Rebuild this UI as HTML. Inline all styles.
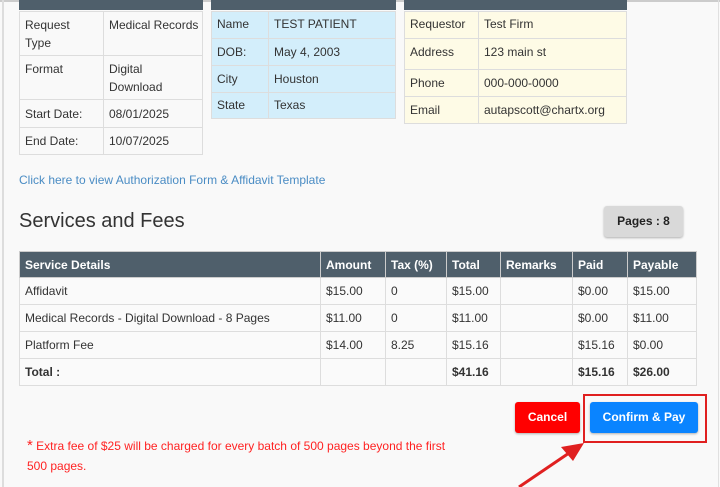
<!DOCTYPE html>
<html><head><style>
body{margin:0;width:720px;height:487px;overflow:hidden;background:#f9f9f9;font-family:"Liberation Sans",Arial,sans-serif;font-size:12px;color:#333;position:relative}
.edge{position:absolute;top:0;bottom:0;left:2px;width:2px;background:#ddd}
.edge2{position:absolute;top:0;bottom:0;right:1px;width:1px;background:#e0e0e0}
.topline{position:absolute;top:0;left:0;right:0;height:2px;background:#ccc}
table{border-collapse:collapse;position:absolute;table-layout:fixed}
td,th{border:1px solid #ddd;text-align:left;vertical-align:top;padding:3px 5px;line-height:18px;white-space:nowrap;overflow:hidden}
.hd{position:absolute;background:#4f5f6b;height:10px;top:0}
.ft th{background:#4f5f6b;color:#fff;font-weight:bold;vertical-align:middle;border-color:#ccc;padding:2px 5px}
.ft td{vertical-align:middle;padding:2px 5px}
.btn{position:absolute;border-radius:3px;color:#fff;font-weight:bold;font-size:12px;text-align:center;line-height:31px;box-shadow:0 1px 2px rgba(0,0,0,.3)}
</style></head><body>
<div class="topline"></div><div class="edge"></div><div class="edge2"></div>
<div class="hd" style="left:19px;width:184px"></div>
<div class="hd" style="left:211px;width:185px"></div>
<div class="hd" style="left:404px;width:223px"></div>
<table style="left:19px;top:11px;width:184px;background:#f9f9f9">
<colgroup><col style="width:84px"><col></colgroup>
<tr style="height:44px"><td style="white-space:normal;padding-top:4px">Request Type</td><td style="padding-right:2px;padding-top:4px">Medical Records</td></tr>
<tr style="height:43px"><td style="padding-top:4px">Format</td><td style="white-space:normal;padding-top:4px">Digital Download</td></tr>
<tr style="height:28px"><td style="vertical-align:middle">Start Date:</td><td style="vertical-align:middle">08/01/2025</td></tr>
<tr style="height:27px"><td style="vertical-align:middle">End Date:</td><td style="vertical-align:middle">10/07/2025</td></tr>
</table>
<table style="left:211px;top:11px;width:185px;background:#d3eefb">
<colgroup><col style="width:57px"><col></colgroup>
<tr style="height:27px"><td>Name</td><td>TEST PATIENT</td></tr>
<tr style="height:27px"><td style="vertical-align:middle">DOB:</td><td style="vertical-align:middle">May 4, 2003</td></tr>
<tr style="height:27px"><td style="vertical-align:middle">City</td><td style="vertical-align:middle">Houston</td></tr>
<tr style="height:26px"><td>State</td><td>Texas</td></tr>
</table>
<table style="left:404px;top:11px;width:223px;background:#fefbe6">
<colgroup><col style="width:74px"><col></colgroup>
<tr style="height:27px"><td>Requestor</td><td>Test Firm</td></tr>
<tr style="height:31px"><td style="padding-top:4px">Address</td><td style="padding-top:4px">123 main st</td></tr>
<tr style="height:27px"><td style="vertical-align:middle">Phone</td><td style="vertical-align:middle">000-000-0000</td></tr>
<tr style="height:27px"><td style="vertical-align:middle">Email</td><td style="vertical-align:middle">autapscott@chartx.org</td></tr>
</table>
<div style="position:absolute;left:19px;top:173px;color:#4a8cc4">Click here to view Authorization Form &amp; Affidavit Template</div>
<div style="position:absolute;left:19px;top:210px;font-size:20px;color:#333">Services and Fees</div>
<div class="btn" style="left:604px;top:206px;width:79px;background:#d9d9d9;color:#222">Pages : 8</div>
<table class="ft" style="left:19px;top:251px;width:678px;background:#fafafa">
<colgroup><col style="width:301px"><col style="width:65px"><col style="width:61px"><col style="width:54px"><col style="width:72px"><col style="width:55px"><col></colgroup>
<tr style="height:26px"><th>Service Details</th><th>Amount</th><th>Tax (%)</th><th>Total</th><th>Remarks</th><th>Paid</th><th>Payable</th></tr>
<tr style="height:27px"><td>Affidavit</td><td>$15.00</td><td>0</td><td>$15.00</td><td></td><td>$0.00</td><td>$15.00</td></tr>
<tr style="height:27px"><td>Medical Records - Digital Download - 8 Pages</td><td>$11.00</td><td>0</td><td>$11.00</td><td></td><td>$0.00</td><td>$11.00</td></tr>
<tr style="height:27px"><td>Platform Fee</td><td>$14.00</td><td>8.25</td><td>$15.16</td><td></td><td>$15.16</td><td>$0.00</td></tr>
<tr style="height:27px;font-weight:bold"><td>Total :</td><td></td><td></td><td>$41.16</td><td></td><td>$15.16</td><td>$26.00</td></tr>
</table>
<div class="btn" style="left:515px;top:402px;width:65px;background:#f00">Cancel</div>
<div class="btn" style="left:590px;top:402px;width:108px;background:#0a84ff">Confirm &amp; Pay</div>
<div style="position:absolute;left:583px;top:394px;width:120px;height:45px;border:2px solid #e02020"></div>
<div style="position:absolute;left:27px;top:436px;width:440px;color:#f22;line-height:20px"><span style="font-size:15px">*</span> Extra fee of $25 will be charged for every batch of 500 pages beyond the first 500 pages.</div>
<svg style="position:absolute;left:0;top:0" width="720" height="487"><line x1="519" y1="487" x2="572" y2="451" stroke="#e02020" stroke-width="3"/><polygon points="584,443 561,447 573,461" fill="#e02020"/></svg>
</body></html>
